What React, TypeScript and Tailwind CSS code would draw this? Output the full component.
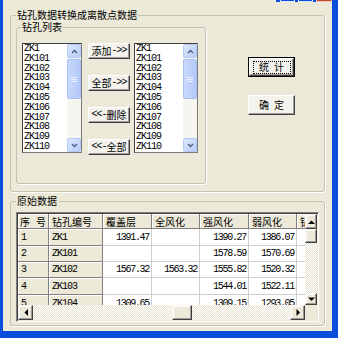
import React from 'react'

const cjk = '[font-family:"Noto_Sans_CJK_SC",sans-serif]'
const mono = '[font-family:"Liberation_Mono",monospace] tracking-[-1px]'
const num = '[font-family:"Liberation_Mono",monospace] tracking-[-1.3px]'

const holes = ['ZK1', 'ZK101', 'ZK102', 'ZK103', 'ZK104', 'ZK105', 'ZK106', 'ZK107', 'ZK108', 'ZK109', 'ZK110']

const rows = [
  ['1', 'ZK1', '1391.47', '', '1390.27', '1386.07', ''],
  ['2', 'ZK101', '', '', '1578.59', '1570.69', ''],
  ['3', 'ZK102', '1567.32', '1563.32', '1555.82', '1520.32', ''],
  ['4', 'ZK103', '', '', '1544.01', '1522.11', ''],
  ['5', 'ZK104', '1309.65', '', '1309.15', '1293.05', ''],
]
const colW = ['w-[31px]', 'w-[54px]', 'w-[49px]', 'w-[48px]', 'w-[49px]', 'w-[48px]', 'w-[20px]']
const rowH = ['h-[17px]', 'h-[16px]', 'h-[16px]', 'h-[17px]', 'h-[17px]']
const headers = ['钻孔编号', '覆盖层', '全风化', '强风化', '弱风化', '钻孔']

const fixedCell = 'flex shrink-0 items-center border-b border-r border-[#808080] bg-[#ece9d8] shadow-[inset_1px_1px_0_#fff]'
const dataCell = 'flex shrink-0 items-center justify-end border-b border-r border-[#cfcfcf] bg-white pr-[2px]'

function Chevron({ up }: { up?: boolean }) {
  return (
    <svg width="7" height="5" viewBox="0 0 7 5">
      <path d={up ? 'M1 4 3.5 1.5 6 4' : 'M1 1 3.5 3.5 6 1'} fill="none" stroke="#4d6185" strokeWidth="1.5" />
    </svg>
  )
}

function Triangle({ dir }: { dir: 'up' | 'down' | 'left' | 'right' }) {
  const d = {
    up: 'M0 4 3.5 0.5 7 4Z',
    down: 'M0 0.5 3.5 4 7 0.5Z',
    left: 'M4 0 0.5 3.5 4 7Z',
    right: 'M0.5 0 4 3.5 0.5 7Z',
  }[dir]
  const vert = dir === 'up' || dir === 'down'
  return (
    <svg width={vert ? 7 : 4} height={vert ? 4 : 7} viewBox={vert ? '0 0 7 4' : '0 0 4 7'}>
      <path d={d} fill="#000" />
    </svg>
  )
}

function XpScrollBar() {
  const btn = 'flex h-[14px] items-center justify-center rounded-[2px] border border-[#b4c8f5] bg-gradient-to-br from-[#dde7fd] to-[#b9cdf8]'
  return (
    <div className="flex w-[14px] shrink-0 flex-col bg-[#f6f5f0]">
      <div className={btn}>
        <Chevron up />
      </div>
      <div className="mt-[1px] flex h-[40px] items-center justify-center rounded-[2px] border border-[#a9c0f3] bg-gradient-to-r from-[#c9d8fc] to-[#b3c9f8]">
        <svg width="6" height="7" viewBox="0 0 6 7">
          <path d="M0 1.5h6M0 3.5h6M0 5.5h6" stroke="#eef3ff" />
        </svg>
      </div>
      <div className="flex-1" />
      <div className={btn}>
        <Chevron />
      </div>
    </div>
  )
}

function ListBox({ width }: { width: string }) {
  return (
    <div className={`flex h-[110px] ${width} shrink-0 border border-t-[#404040] border-l-[#404040] border-b-[#7a7a7a] border-r-[#7a7a7a] bg-white`}>
      <div className="flex-1 overflow-hidden pl-[1px]">
        {holes.map(h => (
          <div key={h} className={`h-[9.8px] text-[10px] leading-[9.8px] text-black ${mono}`}>
            {h}
          </div>
        ))}
      </div>
      <XpScrollBar />
    </div>
  )
}

function Btn({ className, children }: { className?: string; children: React.ReactNode }) {
  return (
    <button className={`flex items-center justify-center border border-t-white border-l-white border-b-[#404040] border-r-[#404040] bg-[#f3f2ec] text-[10px] leading-[10px] text-black shadow-[inset_-1px_-1px_0_#9a9a9a] ${className ?? ''}`}>
      {children}
    </button>
  )
}

function Raised({ className, children }: { className?: string; children?: React.ReactNode }) {
  return (
    <div className={`flex shrink-0 items-center justify-center border border-t-[#f4f3ee] border-l-[#f4f3ee] border-b-[#404040] border-r-[#404040] bg-[#ece9d8] shadow-[inset_-1px_-1px_0_#9a9a9a,inset_1px_1px_0_#fff] ${className ?? ''}`}>
      {children}
    </div>
  )
}

const dither = '[background-image:repeating-conic-gradient(#ffffff_0_25%,#e6e3d3_0_50%)] [background-size:2px_2px]'

function Grid() {
  return (
    <div className="flex h-[110px] w-[303px] flex-col border border-t-[#808080] border-l-[#808080] border-b-white border-r-white p-[1px] shadow-[inset_1px_1px_0_#404040]">
      <div className="flex h-[91px]">
        <div className="flex w-[287px] flex-col overflow-hidden bg-white">
          <div className="flex h-[15px] shrink-0">
            <div className={`${fixedCell} ${colW[0]} justify-between px-[2px] text-[10px] ${cjk}`}>
              <span>序</span>
              <span>号</span>
            </div>
            {headers.map((h, i) => (
              <div key={h} className={`${fixedCell} ${colW[i + 1]} overflow-hidden whitespace-nowrap pl-[3px] text-[10px] ${cjk}`}>
                {h}
              </div>
            ))}
          </div>
          {rows.map((r, ri) => (
            <div key={r[0]} className={`flex shrink-0 ${rowH[ri]}`}>
              {r.map((c, ci) =>
                ci < 2 ? (
                  <div key={ci} className={`${fixedCell} ${colW[ci]} pl-[3px] text-[10px] ${mono}`}>
                    {c}
                  </div>
                ) : (
                  <div key={ci} className={`${dataCell} ${colW[ci]} text-[10px] ${num}`}>
                    {c}
                  </div>
                ),
              )}
            </div>
          ))}
        </div>
        <div className={`flex w-[12px] flex-col ${dither}`}>
          <Raised className="h-[15px]">
            <Triangle dir="up" />
          </Raised>
          <Raised className="h-[14px]" />
          <div className="flex-1" />
          <Raised className="h-[12px]">
            <Triangle dir="down" />
          </Raised>
        </div>
      </div>
      <div className="flex h-[15px]">
        <div className={`flex w-[287px] ${dither}`}>
          <Raised className="w-[15px]">
            <Triangle dir="left" />
          </Raised>
          <div className="w-[139px]" />
          <Raised className="w-[20px]" />
          <div className="flex-1" />
          <Raised className="w-[15px]">
            <Triangle dir="right" />
          </Raised>
        </div>
        <div className="w-[12px] bg-[#ece9d8]" />
      </div>
    </div>
  )
}

export default function App() {
  return (
    <div className="relative flex h-[338px] w-[338px] flex-col bg-[#0b4ede] pb-[7px] pl-[3px] pr-[6px]">
      {/* caption button bottoms peeking in at the top */}
      <div className="absolute right-0 top-0 flex h-[2px] w-[62px] gap-[3px] bg-[#0b4ede] px-[4px]">
        <div className="w-[15px] border-x border-b border-[#dfe8fb]" />
        <div className="w-[15px] border-x border-b border-[#dfe8fb]" />
        <div className="w-[16px] border-x border-b border-[#e6c3b8] bg-[#c8482a]" />
      </div>

      <div className="flex flex-1 flex-col bg-[#ece9d8] text-black">
        {/* 钻孔数据转换成离散点数据 */}
        <fieldset className="ml-[7px] mt-[9px] h-[183px] w-[315px] rounded-[3px] border border-[#c5c2b2] shadow-[1px_1px_0_#fff]">
          <legend className={`ml-[5px] px-[1px] text-[10px] leading-[12px] ${cjk}`}>钻孔数据转换成离散点数据</legend>
          <div className="flex pl-[5px]">
            <fieldset className="h-[163px] w-[190px] rounded-[3px] border border-[#c5c2b2] shadow-[1px_1px_0_#fff]">
              <legend className={`ml-[4px] px-[1px] text-[10px] leading-[12px] ${cjk}`}>钻孔列表</legend>
              <div className="flex pl-[5px] pt-[10px]">
                <ListBox width="w-[60px]" />
                <div className="ml-[6px] flex w-[42px] flex-col gap-[16px]">
                  <Btn className="h-[16px]">
                    <span className={cjk}>添加</span>
                    <span className={mono}>-&gt;&gt;</span>
                  </Btn>
                  <Btn className="h-[16px]">
                    <span className={cjk}>全部</span>
                    <span className={mono}>-&gt;&gt;</span>
                  </Btn>
                  <Btn className="h-[16px]">
                    <span className={mono}>&lt;&lt;-</span>
                    <span className={cjk}>删除</span>
                  </Btn>
                  <Btn className="h-[16px]">
                    <span className={mono}>&lt;&lt;-</span>
                    <span className={cjk}>全部</span>
                  </Btn>
                </div>
                <div className="ml-[4px]">
                  <ListBox width="w-[64px]" />
                </div>
              </div>
            </fieldset>

            <div className="ml-[42px] flex flex-col pt-[36px]">
              <div className="h-[20px] w-[47px] border border-black">
                <Btn className={`h-full w-full gap-[5px] ${cjk}`}>
                  <span className="flex h-[13px] w-[38px] items-center justify-center gap-[5px] border border-dotted border-black">
                    <span>统</span>
                    <span>计</span>
                  </span>
                </Btn>
              </div>
              <Btn className={`mt-[18px] h-[20px] w-[47px] gap-[5px] ${cjk}`}>
                <span>确</span>
                <span>定</span>
              </Btn>
            </div>
          </div>
        </fieldset>

        {/* 原始数据 */}
        <fieldset className="ml-[7px] mt-[3px] h-[131px] w-[315px] rounded-[3px] border border-[#c5c2b2] shadow-[1px_1px_0_#fff]">
          <legend className={`ml-[5px] px-[1px] text-[10px] leading-[12px] ${cjk}`}>原始数据</legend>
          <div className="pl-[5px] pt-[5px]">
            <Grid />
          </div>
        </fieldset>
      </div>
    </div>
  )
}
